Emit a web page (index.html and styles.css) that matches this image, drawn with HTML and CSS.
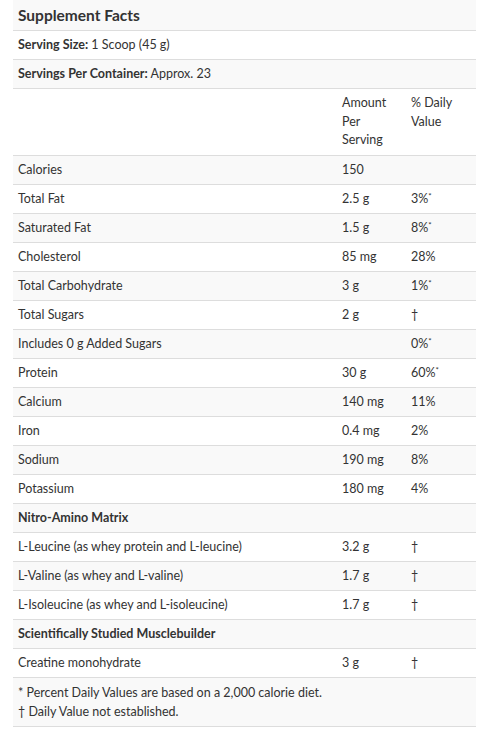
FILE: index.html
```html
<!DOCTYPE html>
<html lang="en">
<head>
<meta charset="utf-8">
<title>Supplement Facts</title>
<link rel="stylesheet" href="styles.css">
</head>
<body>
<table class="facts">
  <colgroup>
    <col class="c-name">
    <col class="c-amt">
    <col class="c-dv">
  </colgroup>
  <tbody>
    <tr><td colspan="3" class="title">Supplement Facts</td></tr>
    <tr><td colspan="3"><b>Serving Size:</b> 1 Scoop (45 g)</td></tr>
    <tr><td colspan="3"><b>Servings Per Container:</b> Approx. 23</td></tr>
    <tr class="head"><td></td><td>Amount Per Serving</td><td>% Daily Value</td></tr>
    <tr><td>Calories</td><td>150</td><td></td></tr>
    <tr><td>Total Fat</td><td>2.5 g</td><td>3%<sup>*</sup></td></tr>
    <tr><td>Saturated Fat</td><td>1.5 g</td><td>8%<sup>*</sup></td></tr>
    <tr><td>Cholesterol</td><td>85 mg</td><td>28%</td></tr>
    <tr><td>Total Carbohydrate</td><td>3 g</td><td>1%<sup>*</sup></td></tr>
    <tr><td>Total Sugars</td><td>2 g</td><td>&dagger;</td></tr>
    <tr><td>Includes 0 g Added Sugars</td><td></td><td>0%<sup>*</sup></td></tr>
    <tr><td>Protein</td><td>30 g</td><td>60%<sup>*</sup></td></tr>
    <tr><td>Calcium</td><td>140 mg</td><td>11%</td></tr>
    <tr><td>Iron</td><td>0.4 mg</td><td>2%</td></tr>
    <tr><td>Sodium</td><td>190 mg</td><td>8%</td></tr>
    <tr><td>Potassium</td><td>180 mg</td><td>4%</td></tr>
    <tr><td colspan="3"><b>Nitro-Amino Matrix</b></td></tr>
    <tr><td>L-Leucine (as whey protein and L-leucine)</td><td>3.2 g</td><td>&dagger;</td></tr>
    <tr><td>L-Valine (as whey and L-valine)</td><td>1.7 g</td><td>&dagger;</td></tr>
    <tr><td>L-Isoleucine (as whey and L-isoleucine)</td><td>1.7 g</td><td>&dagger;</td></tr>
    <tr><td colspan="3"><b>Scientifically Studied Musclebuilder</b></td></tr>
    <tr><td>Creatine monohydrate</td><td>3 g</td><td>&dagger;</td></tr>
    <tr><td colspan="3" class="notes">* Percent Daily Values are based on a 2,000 calorie diet.<br>&dagger; Daily Value not established.</td></tr>
  </tbody>
</table>
</body>
</html>
```

FILE: styles.css
```css
html, body {
  margin: 0;
  padding: 0;
  background: #fff;
}
body {
  padding: 0 9px 0 13px;
  font-family: Lato, "Open Sans", sans-serif;
  font-size: 12.5px;
  line-height: 18px;
  color: #333;
}
.facts {
  width: 463px;
  border-collapse: collapse;
  table-layout: fixed;
}
.c-name { width: 324px; }
.c-amt { width: 69px; }
.c-dv { width: 70px; }
.facts td {
  padding: 5px;
  vertical-align: top;
  border-top: 1px solid #ddd;
}
.facts tr:first-child td {
  border-top: 0;
}
.facts tr:last-child td {
  border-bottom: 1px solid #ddd;
}
.facts tr:nth-child(odd) td {
  background: #f9f9f9;
}
.facts b {
  font-weight: 700;
}
.facts .title {
  font-size: 15.5px;
  font-weight: 700;
  line-height: 20px;
}
.facts .head td {
  line-height: 18.6px;
}
.facts sup {
  font-size: 8px;
  line-height: 0;
  vertical-align: 4px;
}
.facts .notes {
  line-height: 19px;
}
```
